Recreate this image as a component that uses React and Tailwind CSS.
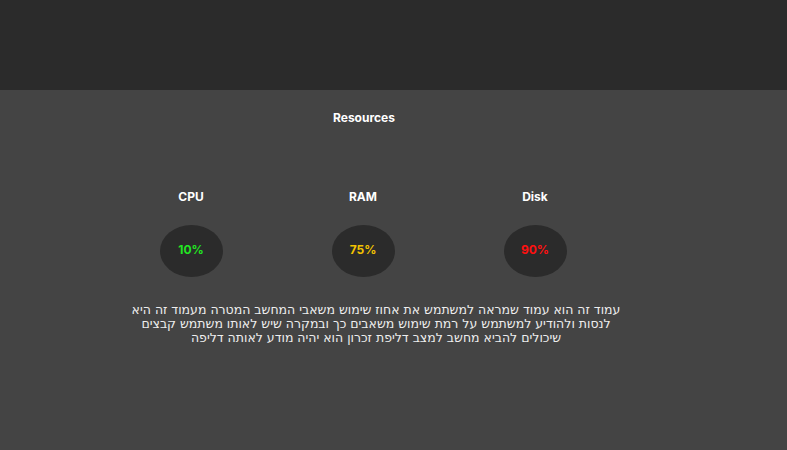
import React from "react"

const STATS = [
  { label: "CPU", value: "10%", color: "text-[#22e522]" },
  { label: "RAM", value: "75%", color: "text-[#f2c200]" },
  { label: "Disk", value: "90%", color: "text-[#ff1010]" },
]

export default function App() {
  return (
    <div className="w-[787px] h-[450px] flex flex-col bg-[#444444] font-['Inter','Liberation_Sans',sans-serif] text-white">
      <header className="h-[90px] shrink-0 bg-[#2b2b2b]" />

      <main className="w-[728px] flex flex-col items-center">
        <h1 className="mt-[20px] text-[12px] font-bold leading-[15px]">Resources</h1>

        <div className="mt-[64px] mr-[2px] grid grid-cols-3 w-[516px]">
          {STATS.map((s) => (
            <div key={s.label} className="flex flex-col items-center">
              <div className="text-[12px] font-bold leading-[15px]">{s.label}</div>
              <div className="mt-[21px] w-[63px] h-[52px] rounded-[50%] bg-[#2b2b2b] flex items-center justify-center">
                <span className={"mt-[-3px] text-[12px] font-bold " + s.color}>{s.value}</span>
              </div>
            </div>
          ))}
        </div>

        <p
          dir="rtl"
          className="mt-[26px] ml-[24px] w-[500px] text-center text-[12.5px] leading-[14px] text-[#eeeeee] font-['DejaVu_Sans',sans-serif]"
        >
          עמוד זה הוא עמוד שמראה למשתמש את אחוז שימוש משאבי המחשב המטרה מעמוד זה היא לנסות ולהודיע למשתמש על רמת שימוש משאבים כך ובמקרה שיש לאותו משתמש קבצים שיכולים להביא מחשב למצב דליפת זכרון הוא יהיה מודע לאותה דליפה
        </p>
      </main>
    </div>
  )
}
